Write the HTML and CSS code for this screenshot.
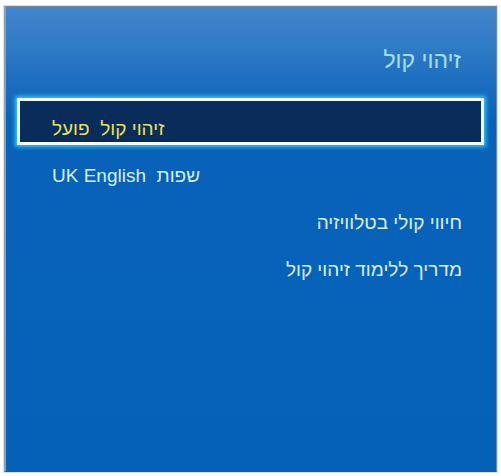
FILE: index.html
```html
<!DOCTYPE html>
<html lang="he">
<head>
    <meta charset="UTF-8">
    <title>זיהוי קול</title>
    <link rel="stylesheet" href="styles.css">
</head>
<body>

    <div class="panel">
        <h1 class="title" dir="rtl">זיהוי קול</h1>

        <!-- Menu -->
        <div class="menu">
            <div class="item selected" dir="rtl">זיהוי קול&nbsp; פועל</div>
            <div class="item" dir="rtl">שפות&nbsp; UK English</div>
            <div class="item right" dir="rtl">חיווי קולי בטלוויזיה</div>
            <div class="item right" dir="rtl">מדריך ללימוד זיהוי קול</div>
        </div>
    </div>

</body>
</html>
```

FILE: styles.css
```css
body {
    margin: 0;
    background-color: #ffffff;
    font-family: "Liberation Sans", Arial, sans-serif;
}
.panel {
    box-sizing: border-box;
    height: 466px;
    margin: 6px 4px 4px 4px;
    padding: 0 12px 0 11px;
    border: 1px solid #6f8aa6;
    border-left: 2px solid #8aa0b6;
    border-bottom-color: #34557a;
    box-shadow: 0 0 0 1px #d4e2ee;
    background: linear-gradient(to bottom, #4286cc 0, #2f7bc6 40px, #1a6cbf 80px, #0862b8 115px, #0561b8 100%);
}
.title {
    margin: 40px 0 0 0;
    padding-right: 23px;
    font-size: 23px;
    font-weight: normal;
    line-height: 26px;
    text-align: right;
    color: #a2e0f8;
}
.menu {
    margin-top: 25px;
}
.item {
    box-sizing: border-box;
    height: 47px;
    padding: 20px 22px 0 35px;
    font-size: 19px;
    line-height: 22px;
    text-align: left;
    color: #d6f0fc;
}
.item.right {
    text-align: right;
}
.item.selected {
    padding: 17px 19px 0 32px;
    border: 3px solid #f4fbff;
    background-color: #0a2c5a;
    color: #e6e25a;
    box-shadow: 0 0 4px 2px #38c4f6;
}
```
